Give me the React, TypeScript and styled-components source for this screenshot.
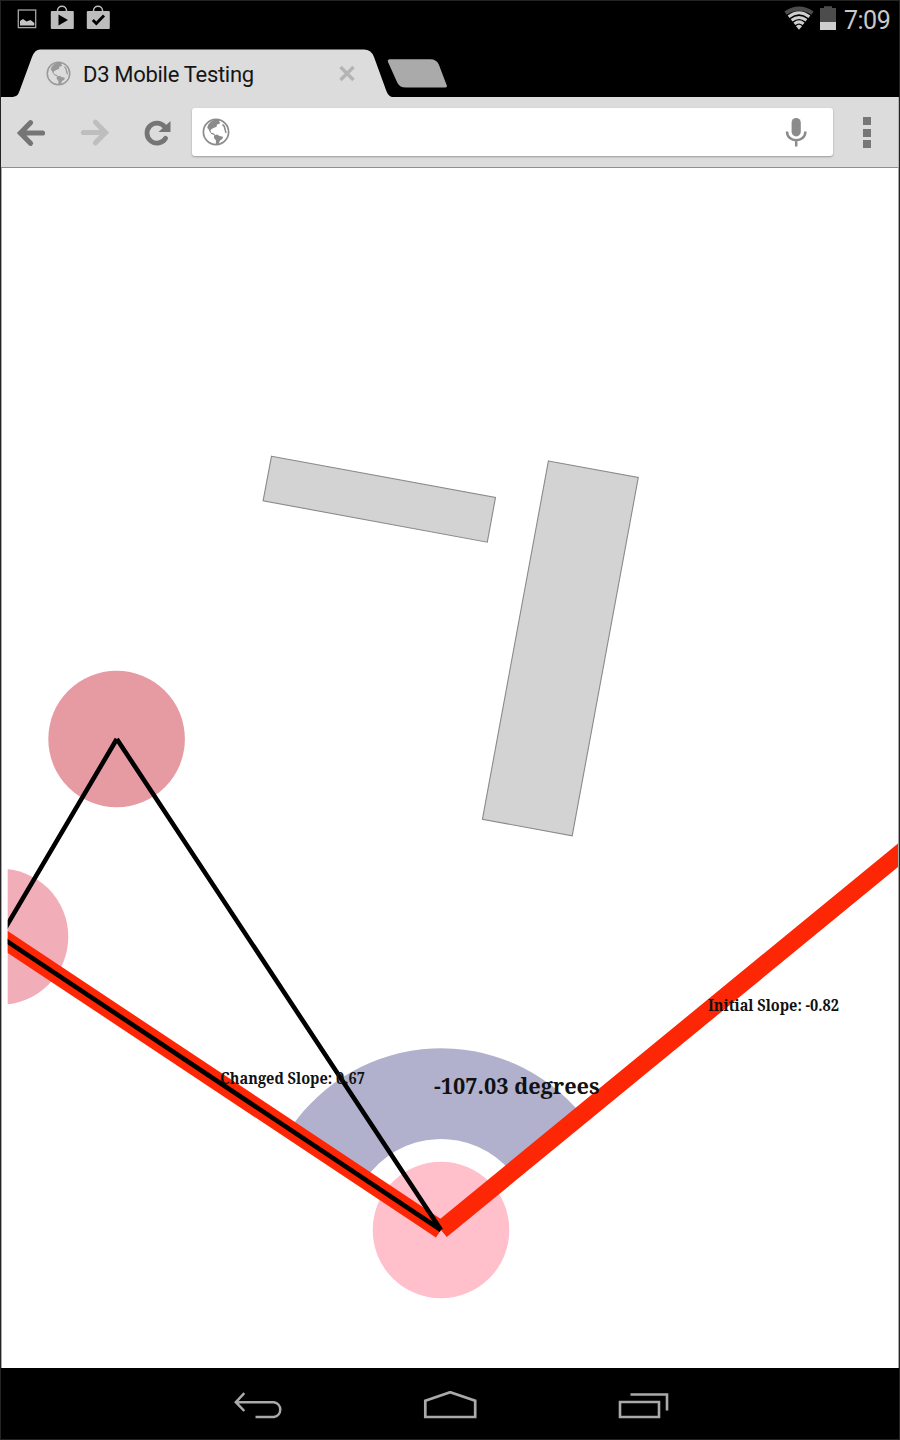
import React from 'react';
import styled, { createGlobalStyle } from 'styled-components';

const GlobalStyle = createGlobalStyle`
  * { box-sizing: border-box; }
  body { margin: 0; background: #000; }
  svg { display: block; flex: none; }
`;

const Device = styled.div`
  display: flex;
  flex-direction: column;
  width: 900px;
  height: 1440px;
  border: 1px solid #242424;
  background: #000;
  overflow: hidden;
  font-family: Roboto, 'Open Sans', sans-serif;
`;

const StatusBar = styled.header`
  display: flex;
  justify-content: space-between;
  align-items: flex-start;
  height: 48px;
  padding: 4px 8px 0 15px;
`;

const StatusGroup = styled.div<{ $gap: number }>`
  display: flex;
  align-items: flex-start;
  gap: ${(p) => p.$gap}px;
`;

const Clock = styled.span`
  color: #c9c9c9;
  font-size: 25px;
  line-height: 31px;
  width: 47px;
  margin-left: 2px;
  letter-spacing: -0.5px;
  white-space: nowrap;
`;

const TabStrip = styled.nav`
  display: flex;
  height: 48px;
  padding-left: 12px;
`;

const Tab = styled.div`
  display: flex;
  align-items: center;
  width: 379px;
  height: 48px;
  padding: 1px 0 0 33px;
  background: #dcdcdc;
  clip-path: path('M0 48C4 47 5 46 6.5 42L19 8Q22 .6 27 .6H351Q358 .6 361 8L373 41Q375 47 379 48Z');
`;

const TabTitle = styled.span`
  flex: 1;
  margin: 3px 0 0 12px;
  color: #151515;
  font-size: 22px;
  line-height: 30px;
  letter-spacing: -0.3px;
`;

const CloseIcon = styled.svg`
  margin-right: 36px;
`;

const NewTab = styled.div`
  width: 61px;
  height: 30px;
  margin: 9px 0 0 -6px;
  background: #aaa;
  clip-path: path('M4 1.2H44Q51 1.2 53 7L61 28Q61 29.5 59 29.5H20Q13 29.5 11 24L2 4Q1 1.2 4 1.2Z');
`;

const Toolbar = styled.div`
  display: flex;
  align-items: center;
  height: 71px;
  padding: 0 27px 0 15px;
  background: #dcdcdc;
  border-bottom: 1px solid #8e8e8e;
  border-right: 1px solid #b5b5b5;
`;

const ToolIcon = styled.svg<{ $gap: number }>`
  margin: 1px ${(p) => p.$gap}px 0 0;
`;

const AddressBar = styled.div`
  display: flex;
  align-items: center;
  justify-content: space-between;
  width: 641px;
  height: 48px;
  padding: 0 25px 0 10px;
  border-radius: 3px;
  background: #fff;
  box-shadow: 0 1px 2px rgba(0, 0, 0, 0.3);
`;

const Menu = styled.div`
  display: flex;
  flex-direction: column;
  gap: 3.5px;
  margin: 1px 0 0 auto;
`;

const MenuDot = styled.i`
  width: 8px;
  height: 8px;
  background: #777;
`;

const Page = styled.main`
  height: 1200px;
  background: #fff;
  border: solid #a8a8a8;
  border-width: 0 1px;
`;

const Label = styled.text`
  font-family: 'Noto Serif', 'Droid Serif', 'DejaVu Serif Condensed', 'DejaVu Serif', serif;
  font-weight: 700;
  fill: #111;
`;

const NavBar = styled.footer`
  display: flex;
  flex: 1;
  align-items: flex-start;
  justify-content: space-between;
  padding: 23px 230px 0 230px;
`;

const Globe = ({ size, color }: { size: number; color: string }) => (
  <svg width={size} height={size} viewBox="0 0 28 28">
    <circle cx="14" cy="14" r="12.6" fill="none" stroke={color} strokeWidth="1.7" />
    <path
      fill={color}
      d="M15.5 1.5L18 2.5 17 4 18.5 4.8 17 6 15 6.5 14.5 9 12.5 9.5 10.5 10.5 8.5 12 9 14.5 12 15.5 13.5 17.5 9.5 16 7.5 13.5 6.5 11 5.2 10 6 7 9 3.5 12 2ZM12 17.5L15 16.5 17.5 18 21 18.8 20.5 21 18 22.5 17 25 15.5 27 13.8 26 14 22.5 12 20Z"
    />
    <path d="M20.5 6.5Q22.8 8 22.8 10.5L24 15" fill="none" stroke={color} strokeWidth="1.5" />
  </svg>
);

const StoreBag = ({ children }: { children: React.ReactNode }) => (
  <svg width="24" height="25" viewBox="0 0 24 25">
    <path d="M7.5 7V5.5a4.5 4.3 0 0 1 9 0V7" fill="none" stroke="#bdbdbd" strokeWidth="1.5" />
    <rect x=".8" y="6" width="23" height="18" rx="1" fill="#bdbdbd" />
    {children}
  </svg>
);

const Chart = () => (
  <svg width="896" height="1200" viewBox="2 168 896 1200">
    <defs>
      <clipPath id="plot">
        <rect x="7.7" y="168" width="892" height="1200" />
      </clipPath>
    </defs>
    <g fill="#d3d3d3" stroke="#8a8a8a" strokeWidth="1.1">
      <path d="M271.5 456.2L495.5 497.4 487.3 542.2 263.1 500.8Z" />
      <path d="M548.4 461L638.3 477.5 572.2 835.8 482.4 819.3Z" />
    </g>
    <g clipPath="url(#plot)">
      <circle cx="116.6" cy="739" r="68.3" fill="#e69aa2" />
      <circle cx="0.3" cy="936.7" r="68" fill="#f1adb8" />
      <circle cx="441" cy="1230" r="68.3" fill="#ffbfcb" />
      <path
        d="M290.2 1128.7A181.8 181.8 0 0 1 581.5 1114.6L511.3 1172.3A91 91 0 0 0 365.4 1179.3Z"
        fill="#b2b1cd"
      />
      <path d="M441 1230L0.3 937M441 1230L910 845.4" stroke="#fd2605" strokeWidth="18.2" />
      <path
        d="M0.3 936.7L441 1230M116.8 739L441 1230M116.8 739L0.3 936.7"
        stroke="#000"
        strokeWidth="4.6"
      />
      <Label x="220" y="1084.3" fontSize="15.5" textLength="145" lengthAdjust="spacingAndGlyphs">
        Changed Slope: 0.67
      </Label>
      <Label x="708" y="1011.3" fontSize="15.5" textLength="131" lengthAdjust="spacingAndGlyphs">
        Initial Slope: -0.82
      </Label>
      <Label x="434" y="1093.6" fontSize="22.5" textLength="165.5" lengthAdjust="spacingAndGlyphs">
        -107.03 degrees
      </Label>
    </g>
  </svg>
);

export default function App() {
  return (
    <Device>
      <GlobalStyle />
      <StatusBar>
        <StatusGroup $gap={12}>
          <svg width="22" height="25" viewBox="0 0 22 25">
            <rect x="2.3" y="5" width="17.4" height="17.6" fill="none" stroke="#a6a6a6" strokeWidth="1.3" />
            <path d="M4 20.5V16l3-2 3.5 2.5 4-1.5 3.8 3v2.5Z" fill="#c4c4c4" />
          </svg>
          <StoreBag>
            <path d="M8.5 9.5L18 15 8.5 20.5Z" fill="#000" />
          </StoreBag>
          <StoreBag>
            <path d="M6.8 15L10.3 18.5 18 10.5" fill="none" stroke="#000" strokeWidth="2.8" />
          </StoreBag>
        </StatusGroup>
        <StatusGroup $gap={6}>
          <svg width="30" height="26" viewBox="0 0 30 26">
            <path d="M1.5 8.2Q15 -1 28.5 8.2" fill="none" stroke="#4c4c4c" strokeWidth="4" />
            <path
              d="M4.6 11.8Q15 3.8 25.4 11.8M7.6 15.3Q15 9.6 22.4 15.3M10.4 18.8Q15 15 19.6 18.8"
              fill="none"
              stroke="#cecece"
              strokeWidth="3"
            />
            <path d="M12 21.2Q15 18.5 18 21.2L15 24.8Z" fill="#cecece" />
          </svg>
          <svg width="16" height="26" viewBox="0 0 16 26">
            <path d="M0 3H4V1.3H12V3H16V17H0Z" fill="#4c4c4c" />
            <rect y="17" width="16" height="8" fill="#cecece" />
          </svg>
          <Clock>7:09</Clock>
        </StatusGroup>
      </StatusBar>
      <TabStrip>
        <Tab>
          <Globe size={25} color="#999" />
          <TabTitle>D3 Mobile Testing</TabTitle>
          <CloseIcon width="18" height="18" viewBox="0 0 18 18">
            <path d="M2.5 2L15.5 15M15.5 2L2.5 15" stroke="#b4b4b4" strokeWidth="3.4" />
          </CloseIcon>
        </Tab>
        <NewTab />
      </TabStrip>
      <Toolbar>
        <ToolIcon $gap={34} width="30" height="30" viewBox="0 0 30 30">
          <path d="M4.5 15H26.5M14.5 4.7L4.5 15 14.5 25.3" fill="none" stroke="#757575" strokeWidth="5.2" strokeLinecap="round" />
        </ToolIcon>
        <ToolIcon $gap={32} width="30" height="30" viewBox="0 0 30 30">
          <path d="M3.5 14.5H25.5M15.5 4.2L25.5 14.5 15.5 24.8" fill="none" stroke="#bebebe" strokeWidth="5.2" strokeLinecap="round" />
        </ToolIcon>
        <ToolIcon $gap={20} width="30" height="30" viewBox="0 0 30 30">
          <path d="M23.6 20.2A10 10 0 1 1 22.6 8.6" fill="none" stroke="#757575" strokeWidth="4.8" strokeLinecap="round" />
          <path d="M28.5 3V14H16.5Z" fill="#757575" />
        </ToolIcon>
        <AddressBar>
          <Globe size={28} color="#8b8b8b" />
          <svg width="24" height="32" viewBox="0 0 24 32">
            <rect x="7.6" y="2" width="9.2" height="18.4" rx="4.6" fill="#8b8b8b" />
            <path d="M3 15.5C3 27 21.4 27 21.4 15.5M12.2 24V30.5" fill="none" stroke="#8b8b8b" strokeWidth="2.5" />
          </svg>
        </AddressBar>
        <Menu>
          <MenuDot />
          <MenuDot />
          <MenuDot />
        </Menu>
      </Toolbar>
      <Page>
        <Chart />
      </Page>
      <NavBar>
        <svg width="52" height="30" viewBox="0 0 52 30" fill="none" stroke="#aaa" strokeWidth="2.5">
          <path d="M13.3 2.2L4.8 11.2 13.3 20M4.8 11.2H43A7.5 7.5 0 0 1 43 26H24.5" />
        </svg>
        <svg width="56" height="30" viewBox="0 0 56 30" fill="none" stroke="#aaa" strokeWidth="2.7">
          <path d="M3.3 9.8L28.2 1.2 53.2 9.8V26H3.3Z" />
        </svg>
        <svg width="52" height="30" viewBox="0 0 52 30" fill="none" stroke="#aaa" strokeWidth="2.6">
          <path d="M3 11H42V26H3ZM13.5 3.5H50V19.5" />
        </svg>
      </NavBar>
    </Device>
  );
}
